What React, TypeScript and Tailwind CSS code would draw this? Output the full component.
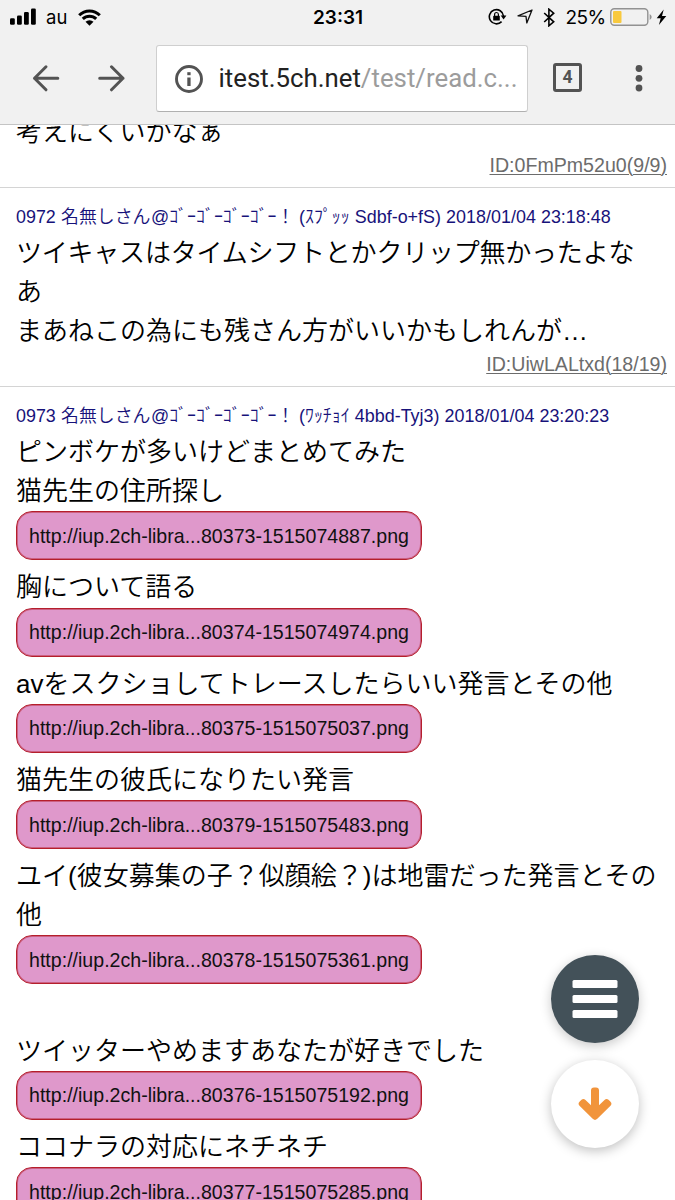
import React from "react";

const STATUS_FONT = "font-['Inter','Liberation_Sans',sans-serif]";

function Line({ children, tight }: { children?: React.ReactNode; tight?: boolean }) {
  return <div className={`h-[39.2px] whitespace-nowrap text-[26px] leading-[42.6px] font-[350] ${tight ? "tracking-[-0.22px]" : ""}`}>{children}</div>;
}

function Latin({ children }: { children: string }) {
  return <span className="font-normal">{children}</span>;
}

function ImageLink({ label }: { label: string }) {
  return (
    <div className="h-[57px] pt-[2px]">
      <a className="flex h-[49px] w-[406px] items-center justify-center rounded-[16px] border border-[#b51f2c] bg-[#df98cb] pt-[2px] text-[19.58px] leading-none whitespace-nowrap text-[#111] shadow-[inset_0_0_0_1px_rgba(181,31,44,0.45)]">
        <span>{label}</span>
      </a>
    </div>
  );
}

function PostHeader({ no, tag, code, date }: { no: string; tag: string; code: string; date: string }) {
  return (
    <div className="flex h-[31px] items-center pt-[3px] text-[17.9px] leading-none font-[350] whitespace-pre text-[#17127a]">
      <span className="w-[45px] font-normal">{no} </span>
      <span className="w-[90px] text-[17.9px]">名無しさん</span>
      <span className="w-[132px] whitespace-pre"><Latin>@</Latin>ｺﾞｰｺﾞｰｺﾞｰｺﾞｰ！</span>
      <span className="pl-[16px]"><Latin>(</Latin>{tag}</span>
      <span className="font-normal tracking-[0.03px]"> {code}) {date}</span>
    </div>
  );
}

function PostId({ children }: { children: string }) {
  return <div className="flex h-[31px] items-center justify-end pr-[8px] text-[19.6px] leading-none text-[#6c6c6c]"><span className="underline decoration-1 underline-offset-2">{children}</span></div>;
}

function StatusBar() {
  return (
    <div className={`flex h-[34px] items-center pl-[10px] text-black ${STATUS_FONT}`}>
      <svg width="27" height="18" viewBox="0 0 27 18" className="shrink-0">
        <rect x="0" y="10.2" width="4.8" height="6.5" rx="1.3" />
        <rect x="7" y="7.5" width="4.8" height="9.2" rx="1.3" />
        <rect x="14" y="4" width="4.8" height="12.7" rx="1.3" />
        <rect x="21" y=".5" width="4.8" height="16.2" rx="1.3" />
      </svg>
      <span className="ml-[9px] w-[23px] text-[18.5px] leading-none">au</span>
      <svg width="23" height="17" viewBox="0 0 23 17" className="ml-[9px] shrink-0">
        <path d="M1.2 6.2a14.6 14.6 0 0 1 20.6 0M4.8 9.9a9.5 9.5 0 0 1 13.4 0" fill="none" stroke="#000" strokeWidth="3" />
        <path d="M7.5 12.8a5.7 5.7 0 0 1 8 0l-4 4z" />
      </svg>
      <span className="ml-[212px] w-[54px] text-[19px] leading-none font-semibold whitespace-nowrap">23:31</span>
      <svg width="19" height="18" viewBox="0 0 19 18" className="ml-[121px] shrink-0" fill="none" stroke="#000">
        <path d="M13.6 13.6a7.1 7.1 0 1 1 1.900-5.600" strokeWidth="1.6" />
        <path d="M12.7 7.6h5.7l-2.8 3.8z" fill="#000" stroke="none" />
        <rect x="5.2" y="7.8" width="6.6" height="4.8" rx=".6" fill="#000" stroke="none" />
        <path d="M6.6 8.2V6.4a1.9 1.9 0 0 1 3.8 0v1.8" strokeWidth="1.2" />
      </svg>
      <svg width="16" height="16" viewBox="0 0 16 16" className="ml-[10px] shrink-0" fill="none" stroke="#111" strokeWidth="1.3" strokeLinejoin="round">
        <path d="M15 1 9.8 14 9 7.3 1 6.9z" />
      </svg>
      <svg width="13" height="19" viewBox="0 0 13 19" className="ml-[10px] shrink-0" fill="none" stroke="#000" strokeWidth="1.6">
        <path d="m1.2 5 9.5 8.800-4.800 4V1.200l4.800 4-9.500 8.800" />
      </svg>
      <span className="ml-[9.5px] w-[40px] text-[19px] leading-none tracking-[-0.6px]">25%</span>
      <svg width="43" height="18" viewBox="0 0 43 18" className="ml-[4.5px] shrink-0">
        <rect x=".8" y=".8" width="37" height="16.4" rx="3.5" fill="none" stroke="#929292" strokeWidth="1.4" />
        <rect x="3" y="3" width="8.5" height="12" rx="1" fill="#f8c93e" />
        <path d="M39.7 6q4 3 0 6z" fill="#929292" />
      </svg>
      <svg width="11" height="17" viewBox="0 0 11 17" className="ml-[3px] shrink-0">
        <path d="M7.7.5.7 9.2h4L2.9 16l7.4-9H6z" />
      </svg>
    </div>
  );
}

function Toolbar() {
  return (
    <div className="flex h-[90px] items-start pt-[11px]">
      <svg width="28" height="28" viewBox="0 0 28 28" className="mt-[19px] ml-[32px] shrink-0" fill="none" stroke="#535353" strokeWidth="3" strokeLinecap="round" strokeLinejoin="round">
        <path d="M25.8 14.3H2.5M14 2.8 2.5 14.3 14 25.8" />
      </svg>
      <svg width="28" height="28" viewBox="0 0 28 28" className="mt-[19px] ml-[37px] shrink-0" fill="none" stroke="#535353" strokeWidth="3" strokeLinecap="round" strokeLinejoin="round">
        <path d="M2.7 14.3H26M14.5 2.8 26 14.3 14.5 25.8" />
      </svg>
      <div className="ml-[31px] flex h-[67px] w-[372px] items-center rounded-[3px] border border-[#cfcfcf] border-b-[#b0b0b0] bg-white font-['Roboto',sans-serif]">
        <svg width="28" height="28" viewBox="0 0 28 28" className="ml-[18px] shrink-0">
          <circle cx="14" cy="14" r="12.5" fill="none" stroke="#535353" strokeWidth="2.9" />
          <rect x="12.3" y="7.2" width="3.3" height="3" fill="#535353" />
          <rect x="12.3" y="12.5" width="3.3" height="8.5" fill="#535353" />
        </svg>
        <span className="ml-[15.5px] pt-px text-[25.8px] leading-none whitespace-nowrap text-[#222]">itest.5ch.net<span className="text-[#9c9c9c]">/test/read.c...</span></span>
      </div>
      <div className="mt-[18px] ml-[25px] flex h-[29px] w-[29px] items-center justify-center rounded-[3px] border-[3px] border-[#535353] pt-px font-['Roboto',sans-serif] text-[17.5px] leading-none font-bold text-[#535353]">4</div>
      <svg width="8" height="28" viewBox="0 0 8 28" className="mt-[19px] ml-[53px] shrink-0" fill="#535353">
        <circle cx="4" cy="4.5" r="3.4" /><circle cx="4" cy="14.3" r="3.4" /><circle cx="4" cy="24" r="3.4" />
      </svg>
    </div>
  );
}

export default function App() {
  return (
    <div className="relative flex h-[1200px] w-[675px] flex-col overflow-hidden bg-white font-['Liberation_Sans','Noto_Sans_CJK_JP',sans-serif] text-black">
      <header className="h-[125px] shrink-0 border-b border-[#c4c4c4] bg-[#f1f1f1]">
        <StatusBar />
        <Toolbar />
      </header>
      <main className="min-h-0 flex-1 overflow-hidden">
        <article className="-mt-[14px] h-[77px] border-b border-[#d4d4d4] pl-[16px]">
          <Line>考えにくいかなぁ</Line>
          <PostId>ID:0FmPm52u0(9/9)</PostId>
        </article>
        <article className="h-[199px] border-b border-[#d4d4d4] pt-[13px] pl-[16px]">
          <PostHeader no="0972" tag="ｽﾌﾟｯｯ" code="Sdbf-o+fS" date="2018/01/04 23:18:48" />
          <Line tight>ツイキャスはタイムシフトとかクリップ無かったよな</Line>
          <Line>あ</Line>
          <Line>まあねこの為にも残さん方がいいかもしれんが<Latin>…</Latin></Line>
          <PostId>ID:UiwLALtxd(18/19)</PostId>
        </article>
        <article className="pt-[13px] pl-[16px]">
          <PostHeader no="0973" tag="ﾜｯﾁｮｲ" code="4bbd-Tyj3" date="2018/01/04 23:20:23" />
          <Line>ピンボケが多いけどまとめてみた</Line>
          <Line>猫先生の住所探し</Line>
          <ImageLink label="http://iup.2ch-libra...80373-1515074887.png" />
          <Line>胸について語る</Line>
          <ImageLink label="http://iup.2ch-libra...80374-1515074974.png" />
          <Line><Latin>av</Latin>をスクショしてトレースしたらいい発言とその他</Line>
          <ImageLink label="http://iup.2ch-libra...80375-1515075037.png" />
          <Line>猫先生の彼氏になりたい発言</Line>
          <ImageLink label="http://iup.2ch-libra...80379-1515075483.png" />
          <Line>ユイ<Latin>(</Latin>彼女募集の子？似顔絵？<Latin>)</Latin>は地雷だった発言とその</Line>
          <Line>他</Line>
          <ImageLink label="http://iup.2ch-libra...80378-1515075361.png" />
          <Line />
          <Line>ツイッターやめますあなたが好きでした</Line>
          <ImageLink label="http://iup.2ch-libra...80376-1515075192.png" />
          <Line>ココナラの対応にネチネチ</Line>
          <ImageLink label="http://iup.2ch-libra...80377-1515075285.png" />
        </article>
      </main>
      <div className="absolute top-[955px] left-[551px] flex flex-col gap-[17px]">
        <button className="flex h-[88px] w-[88px] items-center justify-center rounded-full bg-[#435159] shadow-[0_3px_12px_rgba(0,0,0,0.22)]">
          <svg width="46" height="38" viewBox="0 0 46 38" fill="#fff">
            <rect x=".5" y="0" width="45" height="8" rx="1.5" /><rect x=".5" y="15" width="45" height="8" rx="1.5" /><rect x=".5" y="30" width="45" height="8" rx="1.5" />
          </svg>
        </button>
        <button className="flex h-[88px] w-[88px] items-center justify-center rounded-full bg-white shadow-[0_3px_12px_rgba(0,0,0,0.25)]">
          <svg width="36" height="34" viewBox="0 0 36 34" fill="#f1943b">
            <path d="M14 3.500Q14 .5 17 .5h2q3 0 3 3v14.700l5.500-5.200q2-1.800 4-.2l2 1.900q1.900 2 0 4L20.300 31.800q-2.300 2.300-4.600 0L2.500 18.700q-1.900-2 0-4l2-1.900q2-1.600 4 .2l5.500 5.200z" />
          </svg>
        </button>
      </div>
    </div>
  );
}
